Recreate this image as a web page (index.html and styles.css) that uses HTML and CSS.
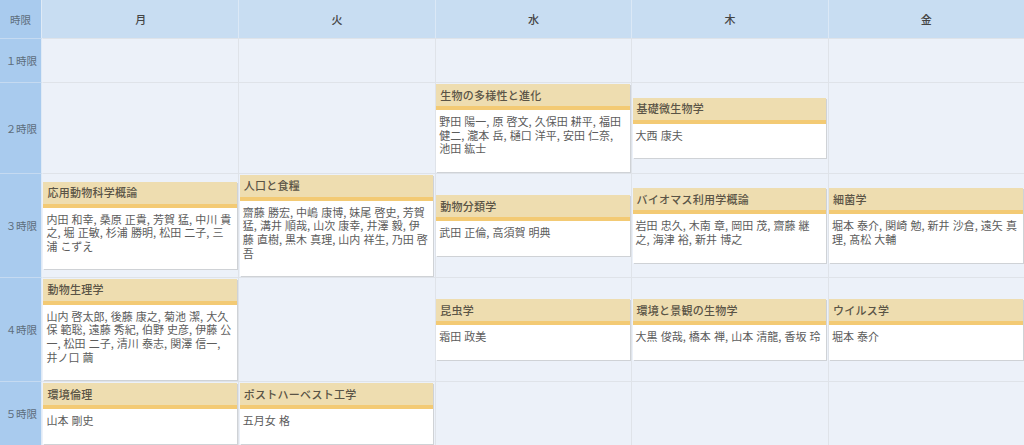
FILE: index.html
```html
<!DOCTYPE html>
<html lang="ja">
<head>
<meta charset="utf-8">
<title>時間割</title>
<link rel="stylesheet" href="styles.css">
</head>
<body>
<div class="timetable">
  <div class="corner">時限</div>
  <div class="day">月</div><div class="day">火</div><div class="day">水</div><div class="day">木</div><div class="day">金</div>

  <div class="period">１時限</div>
  <div class="cell"></div><div class="cell"></div><div class="cell"></div><div class="cell"></div><div class="cell"></div>

  <div class="period">２時限</div>
  <div class="cell"></div><div class="cell"></div>
  <div class="cell"><div class="card"><h3>生物の多様性と進化</h3><p>野田 陽一, 原 啓文, 久保田 耕平, 福田 健二, 瀧本 岳, 樋口 洋平, 安田 仁奈, 池田 紘士</p></div></div>
  <div class="cell"><div class="card"><h3>基礎微生物学</h3><p>大西 康夫</p></div></div>
  <div class="cell"></div>

  <div class="period">３時限</div>
  <div class="cell"><div class="card"><h3>応用動物科学概論</h3><p>内田 和幸, 桑原 正貴, 芳賀 猛, 中川 貴之, 堀 正敏, 杉浦 勝明, 松田 二子, 三浦 こずえ</p></div></div>
  <div class="cell"><div class="card"><h3>人口と食糧</h3><p>齋藤 勝宏, 中嶋 康博, 妹尾 啓史, 芳賀 猛, 溝井 順哉, 山次 康幸, 井澤 毅, 伊藤 直樹, 黒木 真理, 山内 祥生, 乃田 啓吾</p></div></div>
  <div class="cell"><div class="card"><h3>動物分類学</h3><p>武田 正倫, 高須賀 明典</p></div></div>
  <div class="cell"><div class="card"><h3>バイオマス利用学概論</h3><p>岩田 忠久, 木南 章, 岡田 茂, 齋藤 継之, 海津 裕, 新井 博之</p></div></div>
  <div class="cell"><div class="card"><h3>細菌学</h3><p>堀本 泰介, 関崎 勉, 新井 沙倉, 遠矢 真理, 髙松 大輔</p></div></div>

  <div class="period">４時限</div>
  <div class="cell"><div class="card"><h3>動物生理学</h3><p>山内 啓太郎, 後藤 康之, 菊池 潔, 大久保 範聡, 遠藤 秀紀, 伯野 史彦, 伊藤 公一, 松田 二子, 清川 泰志, 関澤 信一, 井ノ口 繭</p></div></div>
  <div class="cell"></div>
  <div class="cell"><div class="card"><h3>昆虫学</h3><p>霜田 政美</p></div></div>
  <div class="cell"><div class="card"><h3>環境と景観の生物学</h3><p>大黒 俊哉, 橋本 禅, 山本 清龍, 香坂 玲</p></div></div>
  <div class="cell"><div class="card"><h3>ウイルス学</h3><p>堀本 泰介</p></div></div>

  <div class="period">５時限</div>
  <div class="cell top"><div class="card"><h3>環境倫理</h3><p>山本 剛史</p></div></div>
  <div class="cell top"><div class="card"><h3>ポストハーベスト工学</h3><p>五月女 格</p></div></div>
  <div class="cell"></div><div class="cell"></div><div class="cell"></div>
</div>
</body>
</html>
```
FILE: styles.css
```css
html, body {
  margin: 0;
  height: 100%;
  overflow: hidden;
  background: #ecf1f9;
}
body {
  font-family: "Noto Sans CJK JP", "Liberation Sans", sans-serif;
  color: #555;
}
.timetable {
  display: grid;
  grid-template-columns: 42px repeat(5, 1fr);
  grid-template-rows: 38px 44px 91px 104px 104px 64px;
  width: 1024px;
  height: 445px;
}
.corner, .day, .period {
  display: flex;
  align-items: center;
  justify-content: center;
  font-size: 10.5px;
}
.corner {
  background: #a9cbee;
  color: #5d6d7c;
  border-right: 1px solid #dfeaf6;
}
.day {
  background: #c8ddf2;
  color: #444;
  border-left: 1px solid #dbe8f6;
  font-size: 11px;
  font-weight: 500;
}
.corner + .day {
  border-left-color: transparent;
}
.period {
  background: #a9cbee;
  color: #5d6d7c;
  border-right: 1px solid #dfeaf6;
  border-top: 1px solid #c5daf1;
  justify-content: flex-end;
  padding-right: 4px;
  letter-spacing: -.05px;
}
.cell {
  display: flex;
  align-items: center;
  background: #ecf1f9;
  border-left: 1px solid #dfe3e9;
  border-top: 1px solid #dfe3e9;
  padding: 0 1.4px 0 .4px;
  min-width: 0;
}
.period + .cell {
  border-left-color: transparent;
}
.cell.top {
  align-items: flex-start;
  padding-top: 1px;
}
.card {
  flex: 1;
  min-width: 0;
  background: #fff;
  box-shadow: 1px 1px 0 #cfd2d6;
}
.card h3 {
  margin: 0;
  height: 26px;
  box-sizing: border-box;
  padding: 1.5px 4px 0;
  background: #eeddb0;
  border-bottom: 4px solid #f3ca74;
  font-size: 11px;
  font-weight: 500;
  line-height: 18px;
  letter-spacing: .25px;
  color: #5a5446;
  white-space: nowrap;
}
.card p {
  margin: 0;
  padding: 5px 4px 16px 3px;
  font-size: 11px;
  line-height: 13.6px;
  word-spacing: .65px;
  color: #5c5c5c;
  word-break: break-all;
}
```
